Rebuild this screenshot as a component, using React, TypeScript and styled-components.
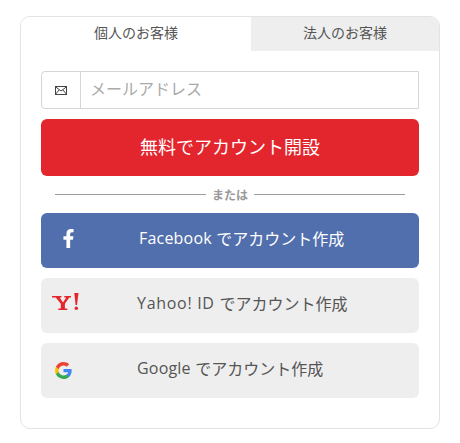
import React from "react";
import styled, { createGlobalStyle } from "styled-components";
import { FaFacebookF } from "react-icons/fa";

const GlobalStyle = createGlobalStyle`
  html, body {
    margin: 0;
    padding: 0;
    background: #fff;
  }
  body {
    font-family: "Open Sans", "Noto Sans CJK JP", sans-serif;
  }
`;

const Page = styled.div`
  width: 460px;
  height: 443px;
  padding: 16px 20px 0;
  box-sizing: border-box;
`;

const Card = styled.div`
  width: 420px;
  height: 413px;
  box-sizing: border-box;
  border: 1px solid #e3e3e3;
  border-radius: 10px;
  overflow: hidden;
`;

const Tabs = styled.div`
  display: flex;
  height: 34px;
`;

const Tab = styled.div<{ $active?: boolean; $width: number }>`
  width: ${(props) => props.$width}px;
  display: flex;
  align-items: center;
  justify-content: center;
  font-size: 14px;
  padding-bottom: 5px;
  box-sizing: border-box;
  color: #555;
  background: ${(props) => (props.$active ? "#fff" : "#eeeeee")};
`;

const Body = styled.div`
  display: flex;
  flex-direction: column;
  padding: 20px 20px 0;
`;

const InputRow = styled.div`
  display: flex;
  height: 38px;
  box-sizing: border-box;
  border: 1px solid #d6d6d6;
  border-radius: 4px 0 0 4px;
`;

const InputIcon = styled.div`
  width: 38px;
  flex: none;
  display: flex;
  align-items: center;
  justify-content: center;
  border-right: 1px solid #d6d6d6;
`;

const EmailInput = styled.input`
  flex: 1;
  min-width: 0;
  border: none;
  outline: none;
  padding: 0 9px 2px;
  font-family: inherit;
  font-size: 16px;
  background: transparent;

  &::placeholder {
    color: #aaa;
    opacity: 1;
  }
`;

const SubmitButton = styled.button`
  height: 57px;
  margin-top: 10px;
  border: none;
  border-radius: 6px;
  background: #e3262e;
  color: #fff;
  font-family: inherit;
  font-size: 18px;
  padding: 0 0 3px;
`;

const Divider = styled.div`
  display: flex;
  align-items: center;
  gap: 6px;
  height: 37px;
  padding: 0 14px;
  color: #999;
  font-size: 12px;
  font-weight: 700;

  &::before,
  &::after {
    content: "";
    flex: 1;
    height: 1px;
    background: #9c9c9c;
  }
`;

const SocialList = styled.div`
  display: flex;
  flex-direction: column;
  gap: 10px;
`;

const SocialButton = styled.button<{ $bg: string; $fg: string; $indent: number }>`
  position: relative;
  height: 55px;
  border: none;
  border-radius: 6px;
  background: ${(props) => props.$bg};
  color: ${(props) => props.$fg};
  font-family: inherit;
  font-size: 16px;
  padding: 0 0 5px ${(props) => props.$indent}px;
  text-align: left;
  display: flex;
  align-items: center;
  white-space: pre;
`;

const BrandName = styled.span<{ $tracking: number }>`
  letter-spacing: ${(props) => props.$tracking}px;
`;

const BrandIcon = styled.span`
  position: absolute;
  left: 0;
  top: 0;
  width: 54px;
  height: 100%;
  display: flex;
  align-items: center;
  justify-content: center;
`;

const FacebookMark = styled(FaFacebookF)`
  margin-top: -4px;
`;

const YahooMark = styled.svg`
  margin: -7px 5px 0 0;
`;

const GoogleMark = styled.svg`
  margin-right: 9px;
`;

const MailIcon = () => (
  <svg width="12" height="9" viewBox="0 0 12 9" fill="none" stroke="#444" strokeWidth="1">
    <rect x="0.5" y="0.5" width="11" height="8" />
    <path d="M0.5 0.8 6 5l5.5-4.2M0.5 8.2 4.3 3.8M11.5 8.2 7.7 3.8" />
  </svg>
);

const YahooIcon = () => (
  <YahooMark width="27" height="18" viewBox="0 0 27 18">
    <path
      fill="#e3262e"
      d="M0 3h9.500v1.500H7.700l3.300 5 3.200-5h-1.900V3h6.700v1.500h-1.700l-4.400 6.300v4.700h2.400V17H6.300v-1.500h2.500v-4.700L3.800 4.500H0z"
    />
    <path fill="#e3262e" d="M22.300 0h4.200l-1.500 12h-1.400z" />
    <circle cx="24.300" cy="15.300" r="1.700" fill="#e3262e" />
  </YahooMark>
);

const GoogleIcon = () => (
  <GoogleMark width="17" height="17" viewBox="2 2 44 44">
    <path fill="#4285f4" d="M45.100 24.500c0-1.600-.1-3.100-.4-4.500H24v8.500h11.800c-.5 2.800-2.100 5.100-4.400 6.600v5.600h7.100c4.200-3.800 6.600-9.500 6.600-16.200z" />
    <path fill="#34a853" d="M24 46c5.900 0 10.900-2 14.500-5.300l-7.100-5.600c-2 1.300-4.500 2.100-7.400 2.100-5.700 0-10.500-3.800-12.200-9H4.500v5.800C8.100 41.200 15.500 46 24 46z" />
    <path fill="#fbbc05" d="M11.800 28.200c-.4-1.300-.7-2.700-.7-4.200s.3-2.900.7-4.200V14H4.500C3 17 2.200 20.400 2.200 24s.8 7 2.300 10l7.300-5.800z" />
    <path fill="#ea4335" d="M24 10.800c3.200 0 6.100 1.100 8.400 3.300l6.300-6.300C34.900 4.200 29.900 2 24 2 15.500 2 8.100 6.800 4.500 14l7.300 5.800c1.700-5.200 6.500-9 12.200-9z" />
  </GoogleMark>
);

export default function App() {
  return (
    <Page>
      <GlobalStyle />
      <Card>
        <Tabs>
          <Tab $active $width={230}>個人のお客様</Tab>
          <Tab $width={188}>法人のお客様</Tab>
        </Tabs>
        <Body>
          <InputRow>
            <InputIcon>
              <MailIcon />
            </InputIcon>
            <EmailInput placeholder="メールアドレス" />
          </InputRow>
          <SubmitButton>無料でアカウント開設</SubmitButton>
          <Divider>または</Divider>
          <SocialList>
            <SocialButton $bg="#526fad" $fg="#fff" $indent={98}>
              <BrandIcon>
                <FacebookMark color="#fff" size={19} />
              </BrandIcon>
              <BrandName $tracking={0.2}>Facebook </BrandName>でアカウント作成
            </SocialButton>
            <SocialButton $bg="#eeeeee" $fg="#555" $indent={96}>
              <BrandIcon>
                <YahooIcon />
              </BrandIcon>
              <BrandName $tracking={0.7}>Yahoo! ID </BrandName>でアカウント作成
            </SocialButton>
            <SocialButton $bg="#eeeeee" $fg="#555" $indent={96}>
              <BrandIcon>
                <GoogleIcon />
              </BrandIcon>
              <BrandName $tracking={0.2}>Google </BrandName>でアカウント作成
            </SocialButton>
          </SocialList>
        </Body>
      </Card>
    </Page>
  );
}
